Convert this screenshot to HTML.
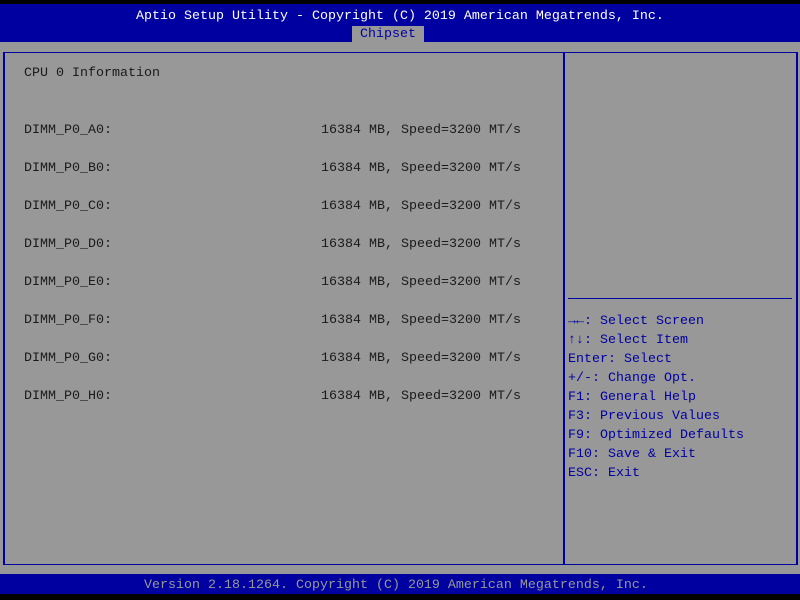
<!DOCTYPE html>
<html><head><meta charset="utf-8"><style>
*{margin:0;padding:0}
body{width:800px;height:600px;background:#989898;position:relative;overflow:hidden;font-family:"Liberation Mono","DejaVu Sans Mono",monospace;font-size:13.33px;}
div{position:absolute;white-space:pre;}
.t{line-height:16px;}
.k{color:#1a1a1a;}
.h{color:#0000a0;}
b{font-weight:bold}
</style></head><body>
<div style="left:0;top:0;width:800px;height:4px;background:#000"></div>
<div style="left:0;top:4px;width:800px;height:38px;background:#0000a0"></div>
<div class="t" style="left:136px;top:9px;color:#fff">Aptio Setup Utility - Copyright (C) 2019 American Megatrends, Inc.</div>
<div style="left:352px;top:26px;width:72px;height:16px;background:#989898"></div>
<div class="t h" style="left:360px;top:27px">Chipset</div>
<div style="left:3px;top:52px;width:791px;height:511px;border:1px solid #0000a0;border-left-width:2px;border-right-width:2px;"></div>
<div style="left:563px;top:52px;width:2px;height:513px;background:#0000a0"></div>
<div style="left:568px;top:298px;width:224px;height:1px;background:#0000a0"></div>
<div class="t k" style="left:24px;top:66px">CPU 0 Information</div>
<div class="t k" style="left:24px;top:123px">DIMM_P0_A0:</div><div class="t k" style="left:321px;top:123px">16384 MB, Speed=3200 MT/s</div>
<div class="t k" style="left:24px;top:161px">DIMM_P0_B0:</div><div class="t k" style="left:321px;top:161px">16384 MB, Speed=3200 MT/s</div>
<div class="t k" style="left:24px;top:199px">DIMM_P0_C0:</div><div class="t k" style="left:321px;top:199px">16384 MB, Speed=3200 MT/s</div>
<div class="t k" style="left:24px;top:237px">DIMM_P0_D0:</div><div class="t k" style="left:321px;top:237px">16384 MB, Speed=3200 MT/s</div>
<div class="t k" style="left:24px;top:275px">DIMM_P0_E0:</div><div class="t k" style="left:321px;top:275px">16384 MB, Speed=3200 MT/s</div>
<div class="t k" style="left:24px;top:313px">DIMM_P0_F0:</div><div class="t k" style="left:321px;top:313px">16384 MB, Speed=3200 MT/s</div>
<div class="t k" style="left:24px;top:351px">DIMM_P0_G0:</div><div class="t k" style="left:321px;top:351px">16384 MB, Speed=3200 MT/s</div>
<div class="t k" style="left:24px;top:389px">DIMM_P0_H0:</div><div class="t k" style="left:321px;top:389px">16384 MB, Speed=3200 MT/s</div>
<div class="t h" style="left:568px;top:312px;line-height:19px"><b>→←</b>: Select Screen
<b>↑↓</b>: Select Item
Enter: Select
+/-: Change Opt.
F1: General Help
F3: Previous Values
F9: Optimized Defaults
F10: Save &amp; Exit
ESC: Exit</div>
<div style="left:0;top:574px;width:800px;height:20px;background:#0000a0"></div>
<div class="t" style="left:144px;top:578px;color:#989898">Version 2.18.1264. Copyright (C) 2019 American Megatrends, Inc.</div>
<div style="left:0;top:594px;width:800px;height:6px;background:#000"></div>
</body></html>
